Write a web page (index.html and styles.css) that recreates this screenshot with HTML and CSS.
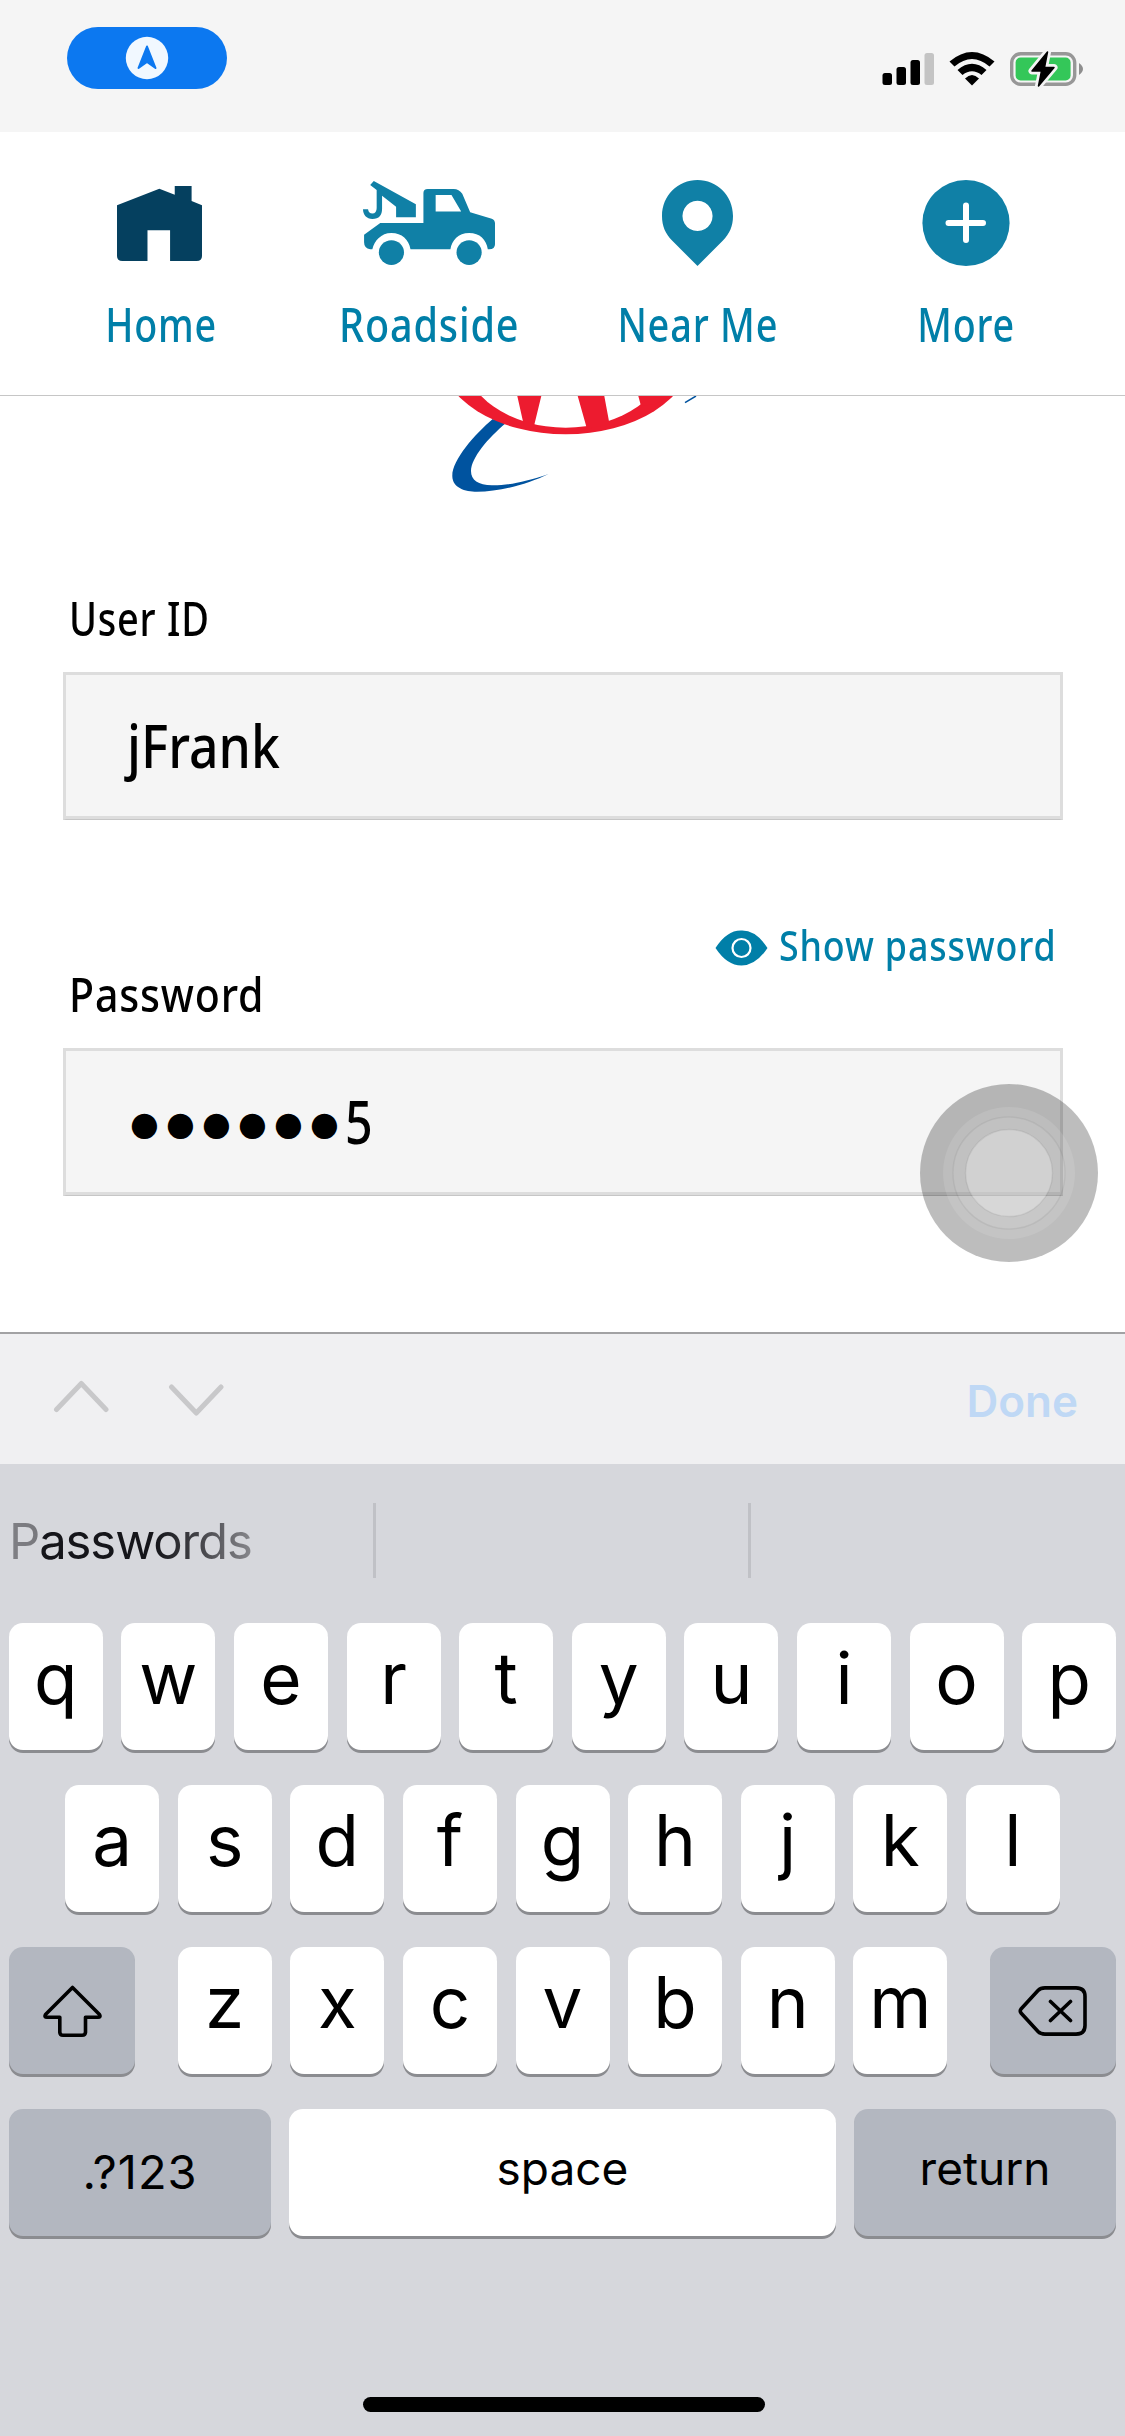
FILE: index.html
```html
<!DOCTYPE html>
<html lang="en">
<head>
<meta charset="utf-8">
<title>Sign in</title>
<link rel="stylesheet" href="styles.css">
</head>
<body>
<div class="screen">
  <header class="status">
    <div class="pill">
      <svg width="44" height="44" viewBox="0 0 44 44"><circle cx="22" cy="22" r="21.2" fill="#f1f8ff"/><path d="M22 10.5 L30.5 32 L22 26 L13.500 32 Z" fill="#0c78f0" stroke="#0c78f0" stroke-width="2" stroke-linejoin="round"/></svg>
    </div>
    <svg class="indicators" width="204" height="40" viewBox="880 49 204 40">
      <rect x="882.5" y="73" width="9.500" height="12" rx="2.500"/>
      <rect x="896.5" y="67" width="9.500" height="18" rx="2.500"/>
      <rect x="910.500" y="60" width="9.500" height="25" rx="2.500"/>
      <rect x="924.500" y="53" width="9.500" height="32" rx="2.500" fill="#c4c4c4"/>
      <path d="M949.500 61.500 Q972 42.500 994.500 61.500 L989.500 66.500 Q972 51.500 954.500 66.500 Z"/>
      <path d="M957.500 70 Q972 57.500 986.500 70 L981.500 75 Q972 67.500 962.500 75 Z"/>
      <path d="M965 78.500 Q972 71.500 979 78.500 L972 85.500 Z"/>
      <rect x="1011.700" y="53.700" width="63" height="30.600" rx="9" fill="none" stroke="#979797" stroke-width="3.400"/>
      <rect x="1015.600" y="57.600" width="55" height="22.800" rx="5" fill="#34c759"/>
      <path d="M1079 63 Q1087 69 1079 75 Z" fill="#8e8e8e"/>
      <path d="M1047.500 52 L1032 71 H1041.500 L1038.500 86 L1054 67.500 H1044.500 Z" stroke="#f4f4f4" stroke-width="7" stroke-linejoin="round"/>
      <path d="M1047.500 52 L1032 71 H1041.500 L1038.500 86 L1054 67.500 H1044.500 Z" stroke="#000" stroke-width="1.500" stroke-linejoin="round"/>
    </svg>
  </header>

  <nav class="nav">
    <a class="nav-item">
      <span class="nav-icon house"><svg width="85" height="75" viewBox="0 0 237 225" preserveAspectRatio="none" fill="#05405f"><path d="M0 58 L118 8 L161 26 V0 H208 V45 L237 58 V210 Q237 225 222 225 H148 V133 H85 V225 H15 Q0 225 0 210Z"/></svg></span>
      <span class="nav-label home">Home</span>
    </a>
    <a class="nav-item">
      <span class="nav-icon"><svg width="132" height="84" viewBox="0 0 367 250" preserveAspectRatio="none" fill="#1080a6"><path fill-rule="evenodd" d="M168 36 Q168 24 180 24 H252 Q267 24 276 38 L298 93 L358 112 Q367 116 367 126 V188 Q367 203 351 203 H347 C343 175 325 155 295 155 C265 155 247 177 243 203 H132 C128 175 108 155 79 155 C50 155 32 178 26 203 H20 Q3 200 3 182 V160 L48 125 H168 Z M202 42 V91 H273 L246 42Z"/><ellipse cx="79" cy="213" rx="35" ry="37"/><ellipse cx="295" cy="213" rx="35" ry="37"/><path d="M30 0 L147 69 V108 H92 V77 L53 44 V82 C53 102 45 113 26 113 C10 113 0 100 0 84 H14 Q16 97 26 97 Q38 96 38 80 V27 L20 12 Z"/></svg></span>
      <span class="nav-label roadside">Roadside</span>
    </a>
    <a class="nav-item">
      <span class="nav-icon"><svg width="71" height="86" viewBox="0 0 198 256" preserveAspectRatio="none" fill="#1080a6"><path fill-rule="evenodd" d="M99 256 L28 180 C10 160 0 138 0 107 C0 45 45 0 99 0 S198 45 198 107 C198 138 188 160 170 180Z M99 62 a42 45 0 1 0 .1 0Z"/></svg></span>
      <span class="nav-label near">Near Me</span>
    </a>
    <a class="nav-item">
      <span class="nav-icon"><svg width="88" height="86" viewBox="0 0 88 86"><ellipse cx="44" cy="43" rx="43.600" ry="43" fill="#1080a6"/><path d="M44 25.500 V60 M26.500 43 H61" stroke="#fff" stroke-width="6" stroke-linecap="round"/></svg></span>
      <span class="nav-label more">More</span>
    </a>
  </nav>

  <main class="form">
    <svg class="logo" width="340" height="114" viewBox="400 396 340 114">
      <path d="M492.700 419 C475 434 452 460 452.300 476 C452.500 488 465 491.700 477 491.700 C500 491.700 528 484 548.700 474 C525 482 508 485.500 492 485.300 C478 485 471 480 471 471 C471 458 488 438 506 423 Z" fill="#00539f"/>
      <path d="M696 396 L685 402.700" stroke="#00539f" stroke-width="1.500"/>
      <ellipse cx="565.700" cy="355.600" rx="125" ry="78.700" fill="#ed1b2f"/>
      <ellipse cx="565.700" cy="355.700" rx="102" ry="72" fill="#fff"/>
      <path d="M517.300 396 H541.300 L534 426 H524 Z M577.700 396 H604.300 L609.500 424 L587 429 Z M638.300 396 L641 406 L655 404 L672 396 Z" fill="#ed1b2f"/>
    </svg>

    <label class="label user"><span>User ID</span></label>
    <div class="input"><span class="value">jFrank</span></div>

    <div class="show">
      <svg class="eye" width="53" height="36" viewBox="0 0 53 36"><path d="M.5 18 Q12 0 26.500 .500 Q41 0 52.500 18 Q41 35.500 26.500 35.500 Q12 35.500 .5 18Z" fill="#007fa8"/><circle cx="26.500" cy="18" r="9" fill="none" stroke="#fff" stroke-width="2.200"/></svg>
      <span class="show-text">Show password</span>
    </div>
    <label class="label pass"><span>Password</span></label>
    <div class="input"><span class="mask">●●●●●●</span><span class="value last">5</span></div>
  </main>

  <section class="toolbar">
    <svg width="172" height="40" viewBox="53 1378 172 40" fill="none" stroke="#c8c8ca" stroke-width="5" stroke-linecap="round" stroke-linejoin="round"><path d="M56.500 1409.500 L81.300 1383.500 L106 1409.500 M171.500 1387 L196.300 1413 L221 1387"/></svg>
    <span class="done">Done</span>
  </section>

  <section class="keyboard">
    <div class="suggest">
      <div class="cell"><span class="suggestion">Passwords</span></div>
      <div class="cell"></div>
      <div class="cell"></div>
    </div>
    <div class="row"><b class="key">q</b><b class="key">w</b><b class="key">e</b><b class="key">r</b><b class="key">t</b><b class="key">y</b><b class="key">u</b><b class="key">i</b><b class="key">o</b><b class="key">p</b></div>
    <div class="row"><b class="key">a</b><b class="key">s</b><b class="key">d</b><b class="key">f</b><b class="key">g</b><b class="key">h</b><b class="key">j</b><b class="key">k</b><b class="key">l</b></div>
    <div class="row split">
      <b class="key dark side"><svg width="60" height="54" viewBox="42 1983 60 54" fill="none" stroke="#000" stroke-width="3.600" stroke-linejoin="round"><path d="M72.500 1986.500 L99.500 2013.500 Q101 2016.300 98 2016.300 H85.500 V2031 Q85.500 2034.300 82 2034.300 H63 Q59.800 2034.300 59.800 2031 V2016.300 H47 Q44 2016.300 45.500 2013.500 Z"/></svg></b>
      <div class="row letters"><b class="key">z</b><b class="key">x</b><b class="key">c</b><b class="key">v</b><b class="key">b</b><b class="key">n</b><b class="key">m</b></div>
      <b class="key dark side"><svg width="70" height="52" viewBox="1018 1984 70 52" fill="none" stroke="#000" stroke-width="3.600" stroke-linejoin="round" stroke-linecap="round"><path d="M1021 2008 L1038 1989.500 Q1040.500 1986.900 1045 1986.900 H1076 Q1085 1986.900 1085 1995.500 V2024.500 Q1085 2033.100 1076 2033.100 H1045 Q1040.500 2033.100 1038 2030.500 L1021 2012 Q1019.500 2010 1021 2008 Z M1050.500 2000.500 L1070.500 2019.500 M1070.500 2000.500 L1050.500 2019.500"/></svg></b>
    </div>
    <div class="row bottom"><b class="key dark wide num">.?123</b><b class="key space">space</b><b class="key dark wide">return</b></div>
    <div class="home-bar"></div>
  </section>

  <svg class="assistive" width="178" height="178" viewBox="0 0 178 178"><circle cx="89" cy="89" r="89" fill="#000" fill-opacity=".26"/><circle cx="89" cy="89" r="66" fill="#fff" fill-opacity=".11"/><circle cx="89" cy="89" r="56" fill="#fff" fill-opacity=".07" stroke="#000" stroke-opacity=".05" stroke-width="1.500"/><circle cx="89" cy="89" r="43.500" fill="#fff" fill-opacity=".27" stroke="#000" stroke-opacity=".06" stroke-width="1.500"/></svg>
</div>
</body>
</html>
```
FILE: styles.css
```css
* { box-sizing: border-box; }
body { margin: 0; background: #fff; }
.screen {
  position: relative;
  width: 1125px;
  height: 2436px;
  overflow: hidden;
  display: flex;
  flex-direction: column;
  font-family: "Noto Sans", sans-serif;
  color: #000;
}
.status {
  height: 132px;
  flex: none;
  background: #f5f5f5;
  display: flex;
  justify-content: space-between;
  align-items: flex-start;
  padding: 27px 41px 0 67px;
}
.pill {
  width: 160px;
  height: 62px;
  border-radius: 31px;
  background: #0c78f0;
  display: flex;
  align-items: center;
  justify-content: center;
}
.indicators { margin-top: 22px; }

.nav {
  height: 264px;
  flex: none;
  display: grid;
  grid-template-columns: repeat(4, 1fr);
  padding: 47px 25px 0 27px;
  border-bottom: 1px solid #c6c6c6;
}
.nav-item { display: flex; flex-direction: column; align-items: center; }
.nav-icon { height: 87px; display: flex; align-items: center; }
.house { padding: 2px 3px 0 0; }
.nav-label {
  margin-top: 29px;
  font-size: 48px;
  line-height: 58px;
  font-weight: 500;
  letter-spacing: 1px;
  color: #007fa8;
  white-space: nowrap;
}
.home { transform: scaleX(.785); }
.roadside { transform: scaleX(.825); }
.near { transform: scaleX(.79); }
.more { transform: scaleX(.785); }

.form {
  height: 936px;
  flex: none;
  padding: 0 62px 0 63px;
  display: flex;
  flex-direction: column;
}
.logo { display: block; margin-left: 337px; flex: none; }
.label {
  font-size: 48px;
  line-height: 58px;
  font-weight: 500;
  letter-spacing: 1px;
  margin-left: 6px;
}
.label span {
  display: inline-block;
  transform-origin: left;
}
.user { margin-top: 79px; }
.user span { transform: scaleX(.79); }
.pass { margin-top: -9px; }
.pass span { transform: scaleX(.855); }
.input {
  height: 148px;
  flex: none;
  margin-top: 25px;
  border: 3px solid #ddd;
  border-bottom: 1px solid #c6c6c6;
  background: #f5f5f5;
  box-shadow: inset 0 -3px 0 #ddd;
  display: flex;
  align-items: center;
  padding: 0 0 4px 61px;
}
.value {
  font-size: 59px;
  line-height: 80px;
  font-weight: 500;
  transform: scaleX(.875);
  transform-origin: left;
}
.last { margin-left: -1px; transform: scaleX(.82); }
.mask {
  margin: 5px 0 0 3px;
  font-family: "DejaVu Sans", sans-serif;
  font-size: 33px;
  line-height: 60px;
  letter-spacing: 7.200px;
}
.show {
  margin-top: 96px;
  height: 58px;
  display: flex;
  align-items: center;
  padding-left: 652px;
}
.eye { flex: none; margin-top: 6px; }
.show-text {
  margin-left: 11px;
  font-size: 42px;
  line-height: 58px;
  font-weight: 500;
  letter-spacing: 1px;
  color: #007fa8;
  white-space: nowrap;
  transform: scaleX(.853);
  transform-origin: left;
}

.toolbar {
  height: 132px;
  flex: none;
  border-top: 2px solid #a2a2a4;
  background: #f0f0f2;
  display: flex;
  align-items: flex-start;
  justify-content: space-between;
  padding: 44px 47px 0 53px;
  font-family: Inter, sans-serif;
}
.done {
  margin-top: -2px;
  font-size: 44px;
  line-height: 50px;
  font-weight: 600;
  color: #bfd8f5;
}

.keyboard {
  flex: 1;
  background: #d6d7dc;
  font-family: Inter, sans-serif;
  display: flex;
  flex-direction: column;
  padding: 0 9px;
}
.suggest {
  height: 75px;
  margin: 39px -9px 45px;
  display: grid;
  grid-template: 75px / 375px 375px 375px;
}
.cell + .cell { border-left: 3px solid #c0c1c6; margin-left: -2px; }
.suggestion {
  margin-left: 9px;
  font-size: 49px;
  line-height: 78px;
  letter-spacing: -1.100px;
  display: inline-block;
  background: linear-gradient(90deg, #808085 0, #77777c 12.500%, #15151a 13.500%, #15151a 60%, #48484d 80%, #88888d 100%);
  -webkit-background-clip: text;
  background-clip: text;
  color: transparent;
}
.row {
  display: flex;
  justify-content: center;
  gap: 18.600px;
  margin-bottom: 35px;
}
.row.split { justify-content: space-between; gap: 0; }
.row.letters { margin: 0; }
.key {
  width: 94px;
  height: 127px;
  flex: none;
  border-radius: 14px;
  background: #fff;
  box-shadow: 0 3px 0 #8b8c90;
  display: flex;
  justify-content: center;
  font-size: 71px;
  line-height: 111px;
  font-weight: 390;
}
.dark { background: #b3b7c0; }
.side { width: 126px; align-items: center; }
.row.bottom { gap: 18px; }
.wide, .space { font-size: 46px; line-height: 118px; font-weight: 400; }
.wide { width: 262px; }
.wide.num { font-size: 47px; letter-spacing: 1px; line-height: 125px; }
.space { flex: 1; }
.home-bar {
  width: 402px;
  height: 15px;
  border-radius: 8px;
  background: #000;
  align-self: center;
  margin-top: auto;
  margin-bottom: 24px;
  margin-left: 2px;
}
.assistive { position: absolute; left: 920px; top: 1084px; }
```
